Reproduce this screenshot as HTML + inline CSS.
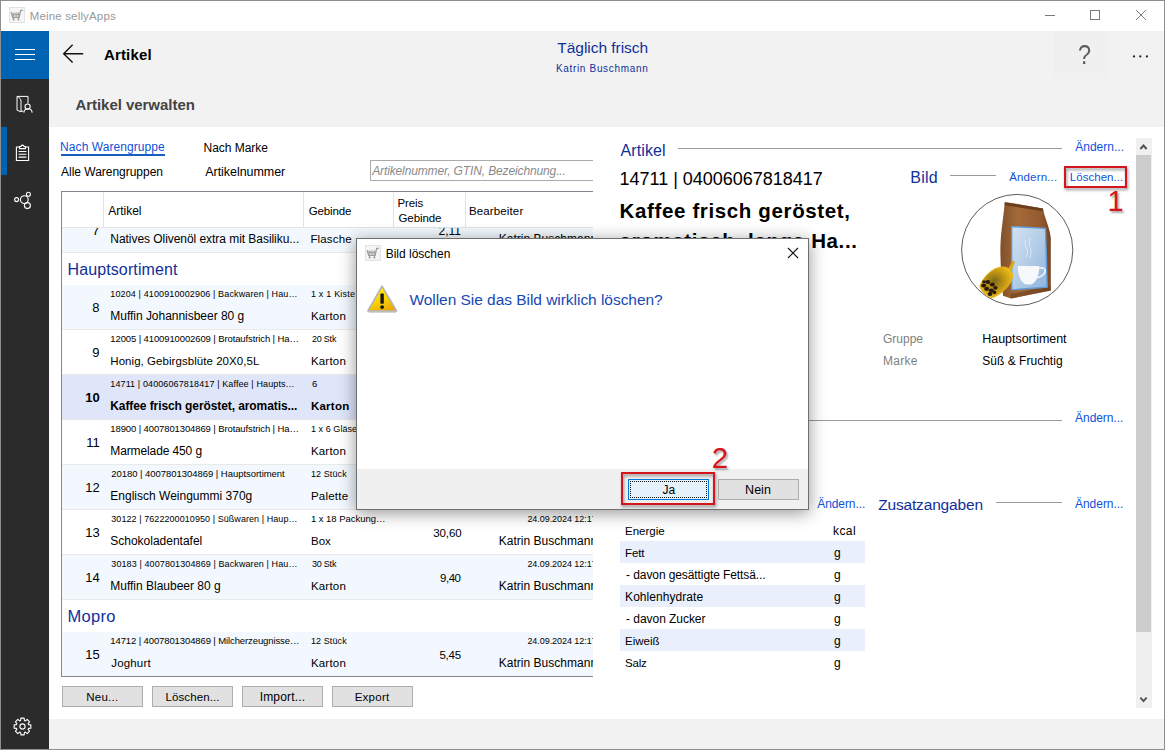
<!DOCTYPE html>
<html lang="de"><head><meta charset="utf-8"><title>Meine sellyApps</title>
<style>
html,body{margin:0;padding:0}
body{width:1165px;height:750px;position:relative;overflow:hidden;background:#fff;font-family:"Liberation Sans",sans-serif}
.t{position:absolute;white-space:nowrap;margin:0}
.b{position:absolute}
.clip{position:absolute;overflow:hidden}
.abs{position:absolute;left:0;top:0}
</style></head><body>
<!-- frame -->
<div class="b" style="left:0;top:0;width:1165px;height:750px;background:#8e8e8e"></div>
<div class="b" style="left:1px;top:1px;width:1163px;height:748px;background:#fff"></div>
<div class="b" style="left:49px;top:31px;width:1115px;height:95.5px;background:#f2f2f2"></div>
<div class="b" style="left:49px;top:719px;width:1115px;height:30px;background:#f2f2f2"></div>
<div class="b" style="left:1054px;top:31px;width:55px;height:47.5px;background:#f0f0f0"></div>
<!-- sidebar -->
<div class="b" style="left:1px;top:31px;width:48px;height:718px;background:#2b2b2b"></div>
<div class="b" style="left:1px;top:31px;width:48px;height:48px;background:#0063b1"></div>
<div class="b" style="left:1px;top:127px;width:5.5px;height:48px;background:#0063b1"></div>
<!-- title bar icon -->
<svg class="b" style="left:9px;top:7px" width="16" height="16" viewBox="0 0 16 16"><rect x=".5" y=".5" width="15" height="15" fill="#f5f5f5" stroke="#e2e2e2"/><path d="M2.2 5.2 L3.6 10.3 L10.2 10.3 L11.6 3.6 L13.8 3.2" fill="none" stroke="#9a9a9a" stroke-width="1.2"/><path d="M4 5.4 L4.6 9.6 M5.9 5.4 L6.1 9.6 M7.8 5.4 L7.7 9.6 M9.6 5.4 L9.2 9.6 M2.6 7.4 L10.6 7.4" stroke="#9a9a9a" stroke-width=".9" fill="none"/><path d="M4.6 10.3 L4.6 12 M9.3 10.3 L9.3 12" stroke="#9a9a9a" stroke-width="1"/><circle cx="4.6" cy="12.4" r="1" fill="#9a9a9a"/><circle cx="9.4" cy="12.4" r="1" fill="#9a9a9a"/></svg>
<!-- window controls -->
<svg class="b" style="left:1040px;top:5px" width="115" height="20" viewBox="0 0 115 20"><path d="M5 10.5 H15" stroke="#7a7a7a" stroke-width="1"/><rect x="50.5" y="5.5" width="9" height="9" fill="none" stroke="#7a7a7a" stroke-width="1"/><path d="M96 5 L106 15 M106 5 L96 15" stroke="#7a7a7a" stroke-width="1"/></svg>
<!-- hamburger -->
<svg class="b" style="left:1px;top:31px" width="48" height="48" viewBox="0 0 48 48"><path d="M14 18.5 H34 M14 23.5 H34 M14 28.5 H34" stroke="#fff" stroke-width="1"/></svg>
<!-- back arrow -->
<svg class="b" style="left:60px;top:41px" width="28" height="26" viewBox="0 0 28 26"><path d="M23.2 12.7 H4 M12.6 3.8 L3.7 12.7 L12.6 21.6" fill="none" stroke="#111" stroke-width="1.4"/></svg>
<!-- more dots -->
<svg class="b" style="left:1128px;top:50px" width="26" height="12" viewBox="0 0 26 12"><circle cx="6" cy="6.4" r="1.1" fill="#222"/><circle cx="12.3" cy="6.4" r="1.1" fill="#222"/><circle cx="18.9" cy="6.4" r="1.1" fill="#222"/></svg>
<!-- sidebar icon 1: folder + person -->
<svg class="b" style="left:13.6px;top:93px" width="22" height="22" viewBox="0 0 22 22"><path d="M3 3.4 H14 V10.4 M3 3.4 C5.4 4.4 7 6 7 8 V18.8 L3 17.2 Z M7 18.2 H9.4" fill="none" stroke="#fff" stroke-width="1" stroke-linejoin="round"/><circle cx="13.6" cy="13.6" r="2.6" fill="none" stroke="#fff" stroke-width="1.1"/><path d="M9.8 19.6 C10.2 16.6 12 15.8 14 15.8 C16 15.8 17.8 16.6 18.2 19.6" fill="none" stroke="#fff" stroke-width="1.1"/></svg>
<!-- sidebar icon 2: clipboard -->
<svg class="b" style="left:13px;top:141px" width="22" height="22" viewBox="0 0 22 22"><path d="M6.5 6 H3.4 V19.5 H15.6 V6 H12.5" fill="none" stroke="#fff" stroke-width="1.1"/><path d="M6.5 7.6 V5.5 H8 C8 3.6 11 3.6 11 5.5 H12.5 V7.6 Z" fill="none" stroke="#fff" stroke-width="1.1" stroke-linejoin="round"/><path d="M5.6 10.5 H13.4 M5.6 13.3 H13.4 M5.6 16.1 H13.4" stroke="#fff" stroke-width="1.1"/></svg>
<!-- sidebar icon 3: share -->
<svg class="b" style="left:11px;top:189px" width="24" height="22" viewBox="0 0 24 22"><circle cx="5.6" cy="10.6" r="2" fill="none" stroke="#fff" stroke-width="1.1"/><circle cx="13.3" cy="10.6" r="3.9" fill="none" stroke="#fff" stroke-width="1.1"/><circle cx="17.4" cy="5.3" r="2" fill="none" stroke="#fff" stroke-width="1.1"/><circle cx="16.4" cy="16.6" r="3" fill="none" stroke="#fff" stroke-width="1.1"/></svg>
<!-- gear -->
<svg class="b" style="left:12px;top:716px" width="21" height="21" viewBox="-10.5 -10.5 21 21"><path id="gearp" fill="none" stroke="#fff" stroke-width="1.1" stroke-linejoin="round" d="M6.01 -1.90 L8.34 -1.66 L8.34 1.66 L6.01 1.90 L5.59 2.90 L7.07 4.72 L4.72 7.07 L2.90 5.59 L1.90 6.01 L1.66 8.34 L-1.66 8.34 L-1.90 6.01 L-2.90 5.59 L-4.72 7.07 L-7.07 4.72 L-5.59 2.90 L-6.01 1.90 L-8.34 1.66 L-8.34 -1.66 L-6.01 -1.90 L-5.59 -2.90 L-7.07 -4.72 L-4.72 -7.07 L-2.90 -5.59 L-1.90 -6.01 L-1.66 -8.34 L1.66 -8.34 L1.90 -6.01 L2.90 -5.59 L4.72 -7.07 L7.07 -4.72 L5.59 -2.90 Z"/><circle r="2.6" fill="none" stroke="#fff" stroke-width="1.1"/></svg>

<div class="b" style="left:61px;top:154px;width:103.5px;height:2px;background:#1a5cc0"></div>
<div class="b" style="left:62px;top:686px;width:81px;height:20.5px;background:#e1e1e1;border:1px solid #adadad;box-sizing:border-box"></div>
<div class="b" style="left:152px;top:686px;width:81px;height:20.5px;background:#e1e1e1;border:1px solid #adadad;box-sizing:border-box"></div>
<div class="b" style="left:242px;top:686px;width:81px;height:20.5px;background:#e1e1e1;border:1px solid #adadad;box-sizing:border-box"></div>
<div class="b" style="left:332px;top:686px;width:81px;height:20.5px;background:#e1e1e1;border:1px solid #adadad;box-sizing:border-box"></div>
<div class="t" style="left:29.70px;top:8.00px;font-size:11.5px;line-height:17px;color:#999;letter-spacing:0.165px;">Meine sellyApps</div>
<div class="t" style="left:104.00px;top:44.00px;font-size:15px;line-height:22px;color:#000;font-weight:700;letter-spacing:0.147px;">Artikel</div>
<div class="t" style="left:75.40px;top:94.00px;font-size:15px;line-height:22px;color:#444;font-weight:700;letter-spacing:-0.037px;">Artikel verwalten</div>
<div class="t" style="left:557.30px;top:36.00px;font-size:15.5px;line-height:23px;color:#11309a;letter-spacing:-0.037px;">Täglich frisch</div>
<div class="t" style="left:555.90px;top:61.00px;font-size:10px;line-height:15px;color:#11309a;letter-spacing:0.677px;">Katrin Buschmann</div>
<div class="t" style="left:1077.60px;top:34.00px;font-size:28px;line-height:42px;color:#5e5e5e;transform:scaleX(.84);transform-origin:0 50%;">?</div>
<div class="t" style="left:60.10px;top:138.00px;font-size:12px;line-height:18px;color:#0f52da;letter-spacing:0.071px;">Nach Warengruppe</div>
<div class="t" style="left:203.50px;top:139.00px;font-size:12px;line-height:18px;color:#000;letter-spacing:-0.024px;">Nach Marke</div>
<div class="t" style="left:61.10px;top:163.00px;font-size:12px;line-height:18px;color:#000;letter-spacing:-0.025px;">Alle Warengruppen</div>
<div class="t" style="left:205.30px;top:163.00px;font-size:12.5px;line-height:19px;color:#000;letter-spacing:-0.051px;">Artikelnummer</div>
<div class="t" style="left:86.30px;top:689.00px;font-size:11.5px;line-height:17px;color:#000;letter-spacing:0.223px;">Neu...</div>
<div class="t" style="left:165.40px;top:689.00px;font-size:11.5px;line-height:17px;color:#000;letter-spacing:0.115px;">Löschen...</div>
<div class="t" style="left:259.70px;top:688.00px;font-size:12px;line-height:18px;color:#000;letter-spacing:0.178px;">Import...</div>
<div class="t" style="left:354.70px;top:689.00px;font-size:11.5px;line-height:17px;color:#000;letter-spacing:0.252px;">Export</div>
<div class="clip" style="left:0;top:0;width:593.3px;height:750px">
<div class="b" style="left:370px;top:160px;width:240px;height:21px;border:1px solid #ababab;box-sizing:border-box;background:#fff"></div>
<div class="b" style="left:61px;top:191px;width:560px;height:486px;border:1px solid #828790;box-sizing:border-box;background:#fff"></div>
<div class="b" style="left:103px;top:192px;width:1px;height:35.5px;background:#e3e3e3"></div>
<div class="b" style="left:303px;top:192px;width:1px;height:35.5px;background:#e3e3e3"></div>
<div class="b" style="left:393px;top:192px;width:1px;height:35.5px;background:#e3e3e3"></div>
<div class="b" style="left:465px;top:192px;width:1px;height:35.5px;background:#e3e3e3"></div>
<div class="b" style="left:62px;top:227px;width:540px;height:1px;background:#e3e3e3"></div>
<div class="t" style="left:372.20px;top:162.00px;font-size:12px;line-height:18px;color:#8a8a8a;font-style:italic;letter-spacing:-0.128px;">Artikelnummer, GTIN, Bezeichnung...</div>
<div class="t" style="left:108.20px;top:202.00px;font-size:12px;line-height:18px;color:#000;letter-spacing:-0.012px;">Artikel</div>
<div class="t" style="left:308.80px;top:203.00px;font-size:11.5px;line-height:17px;color:#000;letter-spacing:-0.164px;">Gebinde</div>
<div class="t" style="left:397.50px;top:195.00px;font-size:11.5px;line-height:17px;color:#000;letter-spacing:-0.113px;">Preis</div>
<div class="t" style="left:398.50px;top:210.00px;font-size:11.5px;line-height:17px;color:#000;letter-spacing:-0.081px;">Gebinde</div>
<div class="t" style="left:469.00px;top:203.00px;font-size:11.5px;line-height:17px;color:#000;letter-spacing:0.130px;">Bearbeiter</div>
<div class="clip" style="left:62px;top:227.6px;width:540px;height:448.6px"><div class="abs" style="left:-62px;top:-227.6px">
<div class="b" style="left:62px;top:207.4px;width:540px;height:45px;background:#f2f8fd"></div>
<div class="b" style="left:62px;top:251.9px;width:540px;height:1px;background:#e9e9e9"></div>
<div class="b" style="left:62px;top:284.5px;width:540px;height:45px;background:#f2f8fd"></div>
<div class="b" style="left:62px;top:329.0px;width:540px;height:1px;background:#e9e9e9"></div>
<div class="b" style="left:62px;top:374.0px;width:540px;height:1px;background:#e9e9e9"></div>
<div class="b" style="left:62px;top:374.5px;width:540px;height:45px;background:#dfe6fa"></div>
<div class="b" style="left:62px;top:419.0px;width:540px;height:1px;background:#e9e9e9"></div>
<div class="b" style="left:62px;top:464.0px;width:540px;height:1px;background:#e9e9e9"></div>
<div class="b" style="left:62px;top:464.5px;width:540px;height:45px;background:#f2f8fd"></div>
<div class="b" style="left:62px;top:509.0px;width:540px;height:1px;background:#e9e9e9"></div>
<div class="b" style="left:62px;top:554.0px;width:540px;height:1px;background:#e9e9e9"></div>
<div class="b" style="left:62px;top:554.5px;width:540px;height:45px;background:#f2f8fd"></div>
<div class="b" style="left:62px;top:599.0px;width:540px;height:1px;background:#e9e9e9"></div>
<div class="b" style="left:62px;top:599.5px;width:540px;height:32px;background:#fff"></div>
<div class="b" style="left:62px;top:631.5px;width:540px;height:45px;background:#f2f8fd"></div>
<div class="b" style="left:62px;top:676.0px;width:540px;height:1px;background:#e9e9e9"></div>
<div class="t" style="left:92.30px;top:221.00px;font-size:13px;line-height:20px;color:#000;">7</div>
<div class="t" style="left:110.30px;top:230.00px;font-size:12px;line-height:18px;color:#000;letter-spacing:-0.049px;">Natives Olivenöl extra mit Basiliku...</div>
<div class="t" style="left:310.40px;top:231.00px;font-size:11.5px;line-height:17px;color:#000;letter-spacing:0.155px;">Flasche</div>
<div class="t" style="left:438.50px;top:222.00px;font-size:12px;line-height:18px;color:#000;">2,11</div>
<div class="t" style="left:498.70px;top:230.00px;font-size:12px;line-height:18px;color:#000;letter-spacing:0.028px;">Katrin Buschmann</div>
<div class="t" style="left:67.50px;top:258.00px;font-size:16px;line-height:24px;color:#11309a;letter-spacing:0.112px;">Hauptsortiment</div>
<div class="t" style="left:92.30px;top:298.00px;font-size:13px;line-height:20px;color:#000;">8</div>
<div class="t" style="left:110.30px;top:287.00px;font-size:9px;line-height:14px;color:#000;letter-spacing:0.127px;">10204 | 4100910002906 | Backwaren | Hau…</div>
<div class="t" style="left:110.30px;top:307.00px;font-size:12px;line-height:18px;color:#000;letter-spacing:-0.029px;">Muffin Johannisbeer 80 g</div>
<div class="t" style="left:310.90px;top:287.00px;font-size:9px;line-height:14px;color:#000;letter-spacing:0.208px;">1 x 1 Kiste</div>
<div class="t" style="left:310.90px;top:308.00px;font-size:11.5px;line-height:17px;color:#000;letter-spacing:0.203px;">Karton</div>
<div class="t" style="left:437.00px;top:299.00px;font-size:12.5px;line-height:19px;color:#000;letter-spacing:0.074px;">4,50</div>
<div class="t" style="left:527.40px;top:287.00px;font-size:9px;line-height:14px;color:#000;letter-spacing:-0.051px;">24.09.2024 12:17</div>
<div class="t" style="left:498.70px;top:307.00px;font-size:12px;line-height:18px;color:#000;letter-spacing:0.028px;">Katrin Buschmann</div>
<div class="t" style="left:92.30px;top:343.00px;font-size:13px;line-height:20px;color:#000;">9</div>
<div class="t" style="left:110.30px;top:332.00px;font-size:9.5px;line-height:14px;color:#000;letter-spacing:-0.112px;">12005 | 4100910002609 | Brotaufstrich | Ha…</div>
<div class="t" style="left:110.30px;top:353.00px;font-size:11.5px;line-height:17px;color:#000;letter-spacing:0.051px;">Honig, Gebirgsblüte 20X0,5L</div>
<div class="t" style="left:311.90px;top:332.00px;font-size:9px;line-height:14px;color:#000;letter-spacing:-0.203px;">20 Stk</div>
<div class="t" style="left:310.90px;top:353.00px;font-size:11.5px;line-height:17px;color:#000;letter-spacing:0.203px;">Karton</div>
<div class="t" style="left:437.00px;top:344.00px;font-size:12.5px;line-height:19px;color:#000;letter-spacing:0.074px;">8,90</div>
<div class="t" style="left:527.40px;top:332.00px;font-size:9px;line-height:14px;color:#000;letter-spacing:-0.051px;">24.09.2024 12:17</div>
<div class="t" style="left:498.70px;top:352.00px;font-size:12px;line-height:18px;color:#000;letter-spacing:0.028px;">Katrin Buschmann</div>
<div class="t" style="left:85.30px;top:388.00px;font-size:13px;line-height:20px;color:#000;font-weight:700;">10</div>
<div class="t" style="left:110.30px;top:377.00px;font-size:9px;line-height:14px;color:#000;letter-spacing:0.112px;">14711 | 04006067818417 | Kaffee | Haupts…</div>
<div class="t" style="left:110.30px;top:397.00px;font-size:12px;line-height:18px;color:#000;font-weight:700;letter-spacing:-0.089px;">Kaffee frisch geröstet, aromatis...</div>
<div class="t" style="left:311.90px;top:377.00px;font-size:9.5px;line-height:14px;color:#000;">6</div>
<div class="t" style="left:310.90px;top:398.00px;font-size:11.5px;line-height:17px;color:#000;font-weight:700;letter-spacing:0.254px;">Karton</div>
<div class="t" style="left:436.00px;top:389.00px;font-size:12.5px;line-height:19px;color:#000;letter-spacing:0.408px;">7,20</div>
<div class="t" style="left:527.40px;top:377.00px;font-size:9px;line-height:14px;color:#000;letter-spacing:-0.051px;">24.09.2024 12:17</div>
<div class="t" style="left:498.70px;top:398.00px;font-size:11.5px;line-height:17px;color:#000;font-weight:700;letter-spacing:-0.294px;">Katrin Buschmann</div>
<div class="t" style="left:86.30px;top:433.00px;font-size:13px;line-height:20px;color:#000;">11</div>
<div class="t" style="left:110.30px;top:422.00px;font-size:9.5px;line-height:14px;color:#000;letter-spacing:-0.112px;">18900 | 4007801304869 | Brotaufstrich | Ha…</div>
<div class="t" style="left:110.30px;top:442.00px;font-size:12px;line-height:18px;color:#000;letter-spacing:-0.115px;">Marmelade 450 g</div>
<div class="t" style="left:310.90px;top:422.00px;font-size:9px;line-height:14px;color:#000;letter-spacing:0.071px;">1 x 6 Gläser</div>
<div class="t" style="left:310.90px;top:443.00px;font-size:11.5px;line-height:17px;color:#000;letter-spacing:0.203px;">Karton</div>
<div class="t" style="left:436.00px;top:434.00px;font-size:12.5px;line-height:19px;color:#000;letter-spacing:0.408px;">3,10</div>
<div class="t" style="left:527.40px;top:422.00px;font-size:9px;line-height:14px;color:#000;letter-spacing:-0.051px;">24.09.2024 12:17</div>
<div class="t" style="left:498.70px;top:442.00px;font-size:12px;line-height:18px;color:#000;letter-spacing:0.028px;">Katrin Buschmann</div>
<div class="t" style="left:85.30px;top:478.00px;font-size:13px;line-height:20px;color:#000;">12</div>
<div class="t" style="left:111.30px;top:467.00px;font-size:9.5px;line-height:14px;color:#000;letter-spacing:-0.043px;">20180 | 4007801304869 | Hauptsortiment</div>
<div class="t" style="left:110.30px;top:487.00px;font-size:12px;line-height:18px;color:#000;letter-spacing:0.006px;">Englisch Weingummi 370g</div>
<div class="t" style="left:310.90px;top:467.00px;font-size:9px;line-height:14px;color:#000;letter-spacing:0.111px;">12 Stück</div>
<div class="t" style="left:310.90px;top:488.00px;font-size:11.5px;line-height:17px;color:#000;letter-spacing:0.232px;">Palette</div>
<div class="t" style="left:436.00px;top:479.00px;font-size:12.5px;line-height:19px;color:#000;letter-spacing:0.408px;">2,20</div>
<div class="t" style="left:527.40px;top:467.00px;font-size:9px;line-height:14px;color:#000;letter-spacing:-0.051px;">24.09.2024 12:17</div>
<div class="t" style="left:498.70px;top:487.00px;font-size:12px;line-height:18px;color:#000;letter-spacing:0.028px;">Katrin Buschmann</div>
<div class="t" style="left:85.30px;top:523.00px;font-size:13px;line-height:20px;color:#000;">13</div>
<div class="t" style="left:111.30px;top:512.00px;font-size:9px;line-height:14px;color:#000;letter-spacing:0.065px;">30122 | 7622200010950 | Süßwaren | Haup…</div>
<div class="t" style="left:110.30px;top:532.00px;font-size:12px;line-height:18px;color:#000;letter-spacing:-0.007px;">Schokoladentafel</div>
<div class="t" style="left:310.90px;top:512.00px;font-size:9.5px;line-height:14px;color:#000;letter-spacing:-0.028px;">1 x 18 Packung…</div>
<div class="t" style="left:310.90px;top:533.00px;font-size:11.5px;line-height:17px;color:#000;letter-spacing:0.067px;">Box</div>
<div class="t" style="left:433.20px;top:525.00px;font-size:11.5px;line-height:17px;color:#000;letter-spacing:-0.096px;">30,60</div>
<div class="t" style="left:527.40px;top:512.00px;font-size:9px;line-height:14px;color:#000;letter-spacing:-0.051px;">24.09.2024 12:17</div>
<div class="t" style="left:498.70px;top:532.00px;font-size:12px;line-height:18px;color:#000;letter-spacing:0.028px;">Katrin Buschmann</div>
<div class="t" style="left:85.30px;top:568.00px;font-size:13px;line-height:20px;color:#000;">14</div>
<div class="t" style="left:111.30px;top:557.00px;font-size:9px;line-height:14px;color:#000;letter-spacing:0.101px;">30183 | 4007801304869 | Backwaren | Hau…</div>
<div class="t" style="left:110.30px;top:577.00px;font-size:12px;line-height:18px;color:#000;letter-spacing:-0.013px;">Muffin Blaubeer 80 g</div>
<div class="t" style="left:311.90px;top:557.00px;font-size:9px;line-height:14px;color:#000;letter-spacing:-0.203px;">30 Stk</div>
<div class="t" style="left:310.90px;top:578.00px;font-size:11.5px;line-height:17px;color:#000;letter-spacing:0.203px;">Karton</div>
<div class="t" style="left:440.00px;top:570.00px;font-size:11.5px;line-height:17px;color:#000;letter-spacing:-0.462px;">9,40</div>
<div class="t" style="left:527.40px;top:557.00px;font-size:9px;line-height:14px;color:#000;letter-spacing:-0.051px;">24.09.2024 12:17</div>
<div class="t" style="left:498.70px;top:577.00px;font-size:12px;line-height:18px;color:#000;letter-spacing:0.028px;">Katrin Buschmann</div>
<div class="t" style="left:67.50px;top:604.00px;font-size:16.5px;line-height:25px;color:#11309a;letter-spacing:0.277px;">Mopro</div>
<div class="t" style="left:85.30px;top:645.00px;font-size:13px;line-height:20px;color:#000;">15</div>
<div class="t" style="left:110.30px;top:634.00px;font-size:9.5px;line-height:14px;color:#000;letter-spacing:-0.110px;">14712 | 4007801304869 | Milcherzeugnisse…</div>
<div class="t" style="left:111.30px;top:655.00px;font-size:11.5px;line-height:17px;color:#000;letter-spacing:0.156px;">Joghurt</div>
<div class="t" style="left:310.90px;top:634.00px;font-size:9px;line-height:14px;color:#000;letter-spacing:0.111px;">12 Stück</div>
<div class="t" style="left:310.90px;top:655.00px;font-size:11.5px;line-height:17px;color:#000;letter-spacing:0.203px;">Karton</div>
<div class="t" style="left:439.40px;top:647.00px;font-size:11.5px;line-height:17px;color:#000;letter-spacing:-0.196px;">5,45</div>
<div class="t" style="left:527.40px;top:634.00px;font-size:9px;line-height:14px;color:#000;letter-spacing:-0.051px;">24.09.2024 12:17</div>
<div class="t" style="left:498.70px;top:654.00px;font-size:12px;line-height:18px;color:#000;letter-spacing:0.028px;">Katrin Buschmann</div>
</div></div>
</div>
<!-- right panel -->
<div class="b" style="left:678px;top:148px;width:384px;height:1px;background:#9a9a9a"></div>
<div class="b" style="left:950px;top:175px;width:46px;height:1px;background:#9a9a9a"></div>
<div class="b" style="left:676px;top:420px;width:386px;height:1px;background:#9a9a9a"></div>
<div class="b" style="left:708px;top:502px;width:98px;height:1px;background:#9a9a9a"></div>
<div class="b" style="left:996px;top:502px;width:66px;height:1px;background:#9a9a9a"></div>
<div class="b" style="left:620px;top:541px;width:245px;height:22px;background:#e9effb"></div>
<div class="b" style="left:620px;top:585px;width:245px;height:22px;background:#e9effb"></div>
<div class="b" style="left:620px;top:629px;width:245px;height:22px;background:#e9effb"></div>
<div class="b" style="left:1136px;top:138px;width:16px;height:570px;background:#f0f0f0"></div>
<div class="b" style="left:1136px;top:154.5px;width:15px;height:477.5px;background:#cdcdcd"></div>
<svg class="b" style="left:1136px;top:138px" width="16" height="17"><path d="M4.4 11 L7.5 7.5 L10.6 11" fill="none" stroke="#505050" stroke-width="1.9"/></svg>
<svg class="b" style="left:1136px;top:691px" width="16" height="17"><path d="M4.4 6.6 L7.5 10.1 L10.6 6.6" fill="none" stroke="#505050" stroke-width="1.9"/></svg>
<div class="t" style="left:620.60px;top:139.00px;font-size:16px;line-height:24px;color:#11309a;letter-spacing:0.084px;">Artikel</div>
<div class="t" style="left:1075.20px;top:138.00px;font-size:12px;line-height:18px;color:#0f52da;letter-spacing:0.017px;">Ändern...</div>
<div class="t" style="left:619.60px;top:166.00px;font-size:18px;line-height:27px;color:#000;letter-spacing:-0.016px;">14711 | 04006067818417</div>
<div class="t" style="left:910.30px;top:166.00px;font-size:16px;line-height:24px;color:#11309a;letter-spacing:0.240px;">Bild</div>
<div class="t" style="left:1009.20px;top:169.00px;font-size:11.5px;line-height:17px;color:#0f52da;letter-spacing:0.153px;">Ändern...</div>
<div class="t" style="left:1069.80px;top:169.00px;font-size:11.5px;line-height:17px;color:#0f52da;letter-spacing:0.037px;">Löschen...</div>
<div class="t" style="left:619.60px;top:195.00px;font-size:20.5px;line-height:31px;color:#000;font-weight:700;letter-spacing:0.634px;">Kaffee frisch geröstet,</div>
<div class="t" style="left:619.60px;top:225.00px;font-size:20.5px;line-height:31px;color:#000;font-weight:700;letter-spacing:0.641px;">aromatisch, lange Ha...</div>
<div class="t" style="left:883.00px;top:330.00px;font-size:12px;line-height:18px;color:#7f7f7f;letter-spacing:-0.010px;">Gruppe</div>
<div class="t" style="left:982.30px;top:330.00px;font-size:12.5px;line-height:19px;color:#000;letter-spacing:-0.037px;">Hauptsortiment</div>
<div class="t" style="left:883.00px;top:352.00px;font-size:12px;line-height:18px;color:#7f7f7f;letter-spacing:0.258px;">Marke</div>
<div class="t" style="left:982.30px;top:352.00px;font-size:12px;line-height:18px;color:#000;letter-spacing:0.019px;">Süß &amp; Fruchtig</div>
<div class="t" style="left:619.60px;top:410.00px;font-size:15px;line-height:22px;color:#11309a;letter-spacing:0.005px;">Preise</div>
<div class="t" style="left:1075.10px;top:409.00px;font-size:12px;line-height:18px;color:#0f52da;letter-spacing:-0.070px;">Ändern...</div>
<div class="t" style="left:619.60px;top:493.00px;font-size:16px;line-height:24px;color:#11309a;letter-spacing:0.162px;">Nährwerte</div>
<div class="t" style="left:817.30px;top:495.00px;font-size:12px;line-height:18px;color:#0f52da;letter-spacing:-0.095px;">Ändern...</div>
<div class="t" style="left:878.20px;top:493.00px;font-size:15.5px;line-height:23px;color:#11309a;letter-spacing:-0.170px;">Zusatzangaben</div>
<div class="t" style="left:1075.00px;top:495.00px;font-size:12px;line-height:18px;color:#0f52da;letter-spacing:-0.033px;">Ändern...</div>
<div class="t" style="left:625.10px;top:523.00px;font-size:11.5px;line-height:17px;color:#000;letter-spacing:-0.024px;">Energie</div>
<div class="t" style="left:833.10px;top:522.00px;font-size:12px;line-height:18px;color:#000;letter-spacing:0.375px;">kcal</div>
<div class="t" style="left:625.10px;top:545.00px;font-size:11.5px;line-height:17px;color:#000;letter-spacing:-0.138px;">Fett</div>
<div class="t" style="left:834.10px;top:544.00px;font-size:12px;line-height:18px;color:#000;">g</div>
<div class="t" style="left:626.10px;top:566.00px;font-size:12px;line-height:18px;color:#000;letter-spacing:-0.094px;">- davon gesättigte Fettsä...</div>
<div class="t" style="left:834.10px;top:566.00px;font-size:12px;line-height:18px;color:#000;">g</div>
<div class="t" style="left:625.10px;top:588.00px;font-size:12px;line-height:18px;color:#000;letter-spacing:0.049px;">Kohlenhydrate</div>
<div class="t" style="left:834.10px;top:588.00px;font-size:12px;line-height:18px;color:#000;">g</div>
<div class="t" style="left:626.10px;top:610.00px;font-size:12px;line-height:18px;color:#000;letter-spacing:-0.049px;">- davon Zucker</div>
<div class="t" style="left:834.10px;top:610.00px;font-size:12px;line-height:18px;color:#000;">g</div>
<div class="t" style="left:625.10px;top:633.00px;font-size:11.5px;line-height:17px;color:#000;letter-spacing:-0.036px;">Eiweiß</div>
<div class="t" style="left:834.10px;top:632.00px;font-size:12px;line-height:18px;color:#000;">g</div>
<div class="t" style="left:625.10px;top:655.00px;font-size:11.5px;line-height:17px;color:#000;letter-spacing:-0.207px;">Salz</div>
<div class="t" style="left:834.10px;top:654.00px;font-size:12px;line-height:18px;color:#000;">g</div>
<!-- product image -->
<svg class="b" style="left:957px;top:190px" width="120" height="120" viewBox="957 190 120 120">
<defs>
<linearGradient id="bagg" x1="0" y1="0" x2="1" y2="0"><stop offset="0" stop-color="#80502a"/><stop offset=".35" stop-color="#a46a3a"/><stop offset=".8" stop-color="#935a2f"/><stop offset="1" stop-color="#744623"/></linearGradient>
<linearGradient id="lblg" x1="0" y1="0" x2="1" y2="1"><stop offset="0" stop-color="#d3e2f1"/><stop offset=".5" stop-color="#b3cde8"/><stop offset="1" stop-color="#8db3dc"/></linearGradient>
<radialGradient id="scg" cx=".45" cy=".45" r=".6"><stop offset="0" stop-color="#7d6a16"/><stop offset=".55" stop-color="#c79a12"/><stop offset="1" stop-color="#f1c21a"/></radialGradient>
<clipPath id="circ"><circle cx="1017.2" cy="250" r="55.2"/></clipPath>
</defs>
<circle cx="1017.2" cy="250" r="55.6" fill="#fff" stroke="#4a4a4a" stroke-width=".9"/>
<g clip-path="url(#circ)">
<path d="M1004.8 202.2 L1012 203 L1042.9 208.6 L1044.2 214 C1046.5 222 1050.2 230 1050.8 238 L1050.8 290.6 L1011 298.6 L1003 295.8 C1001.5 280 1000.2 262 1000.4 247 C1000.8 232 1003.6 216 1004.8 202.2 Z" fill="url(#bagg)"/>
<path d="M1004.8 202.2 L1042.9 208.6 L1043.3 211.2 L1004.6 205.2 Z" fill="#6a3d1c"/>
<path d="M1011 298.6 L1050.8 290.6 L1050.8 286 L1010.6 294 Z" fill="#6a3d1c" opacity=".6"/>
<path d="M1011.7 226.6 L1045.5 228.3 L1047.2 287.2 L1011.7 289.8 Z" fill="url(#lblg)" stroke="#5f9ad6" stroke-width="1.4"/>
<path d="M1026 240 C1022 246 1031 250 1026 257 M1030 238 C1027 246 1034 250 1029.5 258" fill="none" stroke="#e6eef8" stroke-width=".9" opacity=".9"/>
<path d="M1017.8 266 H1039.2 C1039.4 274 1037 281.5 1031.6 284.4 H1025.4 C1020 281.5 1017.6 274 1017.8 266 Z" fill="#f6f8fb"/>
<path d="M1039 268.2 C1044.5 266.4 1047 270.6 1043.6 274.2 C1041.6 276.2 1039 277.4 1037.2 277.8" fill="none" stroke="#f6f8fb" stroke-width="1.5"/>
<path d="M1006.6 271.4 L1012.2 261.4 C1013.2 259.8 1015.4 261 1014.6 262.8 L1010.4 273.4 Z" fill="#d9a81a"/>
<path d="M979.8 286.5 C983 276 994 266.4 1003.6 267 C1010.6 267.6 1013.4 272.8 1012.4 277.6 C1010 287.4 998.4 296 992.6 297.6 C989 298 981 291.6 979.8 286.5 Z" fill="url(#scg)" stroke="#e7b516" stroke-width="1"/>
<g fill="#2a190e"><ellipse cx="983.6" cy="285.6" rx="2.5" ry="2"/><ellipse cx="987.8" cy="282" rx="2.4" ry="2"/><ellipse cx="992.4" cy="284.4" rx="2.5" ry="2"/><ellipse cx="986.6" cy="288.8" rx="2.5" ry="2.1"/><ellipse cx="991.2" cy="290.6" rx="2.5" ry="2"/><ellipse cx="995.4" cy="287.8" rx="2.2" ry="1.9"/><ellipse cx="990" cy="294" rx="2.4" ry="1.9"/><ellipse cx="994.4" cy="292.4" rx="2" ry="1.8"/><ellipse cx="984" cy="281.8" rx="1.8" ry="1.5"/></g>
</g>
</svg>

<!-- dialog -->
<div class="b" style="left:356px;top:238px;width:453px;height:272px;box-sizing:border-box;border:1px solid #6f6f6f;background:#fff;box-shadow:0 3px 16px rgba(0,0,0,.42)"></div>
<div class="b" style="left:357px;top:469px;width:451px;height:40px;background:#f0f0f0"></div>
<div class="b" style="left:628px;top:479px;width:81px;height:20.5px;box-sizing:border-box;border:1px solid #0078d7;background:#e5f1fb"></div>
<div class="b" style="left:630px;top:481px;width:77px;height:16.5px;box-sizing:border-box;border:1px dotted #111"></div>
<div class="b" style="left:718px;top:479px;width:81px;height:20.5px;box-sizing:border-box;border:1px solid #adadad;background:#e1e1e1"></div>

<div class="t" style="left:385.70px;top:245.00px;font-size:12px;line-height:18px;color:#000;">Bild löschen</div>
<div class="t" style="left:409.40px;top:288.00px;font-size:15.5px;line-height:23px;color:#1848b4;letter-spacing:-0.039px;">Wollen Sie das Bild wirklich löschen?</div>
<div class="t" style="left:662.40px;top:481.00px;font-size:12px;line-height:18px;color:#000;">Ja</div>
<div class="t" style="left:745.10px;top:481.00px;font-size:12.5px;line-height:19px;color:#000;letter-spacing:0.015px;">Nein</div>
<!-- dialog title icon -->
<svg class="b" style="left:365px;top:245px" width="16" height="16" viewBox="0 0 16 16"><rect x=".5" y=".5" width="15" height="15" fill="#f5f5f5" stroke="#e2e2e2"/><path d="M2.2 5.2 L3.6 10.3 L10.2 10.3 L11.6 3.6 L13.8 3.2" fill="none" stroke="#9a9a9a" stroke-width="1.2"/><path d="M4 5.4 L4.6 9.6 M5.9 5.4 L6.1 9.6 M7.8 5.4 L7.7 9.6 M9.6 5.4 L9.2 9.6 M2.6 7.4 L10.6 7.4" stroke="#9a9a9a" stroke-width=".9" fill="none"/><path d="M4.6 10.3 L4.6 12 M9.3 10.3 L9.3 12" stroke="#9a9a9a" stroke-width="1"/><circle cx="4.6" cy="12.4" r="1" fill="#9a9a9a"/><circle cx="9.4" cy="12.4" r="1" fill="#9a9a9a"/></svg>
<!-- dialog close -->
<svg class="b" style="left:786px;top:246px" width="14" height="14" viewBox="0 0 14 14"><path d="M2 2 L12 12 M12 2 L2 12" stroke="#111" stroke-width="1.1"/></svg>
<!-- warning icon -->
<svg class="b" style="left:365px;top:283px" width="35" height="31" viewBox="0 0 35 31"><defs><linearGradient id="wg" x1="0.3" y1="0" x2="0.8" y2="1"><stop offset="0" stop-color="#fff200"/><stop offset=".55" stop-color="#f8cf00"/><stop offset="1" stop-color="#eba300"/></linearGradient></defs><path d="M17 3.2 L31.6 28 H2.9 Z" fill="url(#wg)" stroke="#b4b4b8" stroke-width="1.6" stroke-linejoin="round"/><path d="M3.6 29.2 H31" stroke="#9a9a9a" stroke-width="1" opacity=".6"/><rect x="15.4" y="10.4" width="3.4" height="10.4" rx=".8" fill="#15151f"/><circle cx="17.1" cy="24.1" r="1.9" fill="#15151f"/></svg>

<!-- annotations -->
<div class="b" style="left:1064px;top:166px;width:63px;height:22px;box-sizing:border-box;border:2px solid #d4161c;filter:drop-shadow(1.5px 2px 1.5px rgba(0,0,0,.45))"></div>
<div class="b" style="left:621px;top:472.3px;width:93.5px;height:32.3px;box-sizing:border-box;border:2px solid #d4161c;filter:drop-shadow(1.5px 2px 1.5px rgba(0,0,0,.45))"></div>
<div class="t" style="left:1107.60px;top:179.00px;font-size:29px;line-height:44px;color:#d4161c;text-shadow:1.5px 1.5px 2px rgba(0,0,0,.35);">1</div>
<div class="t" style="left:711.70px;top:436.00px;font-size:29.5px;line-height:44px;color:#d4161c;text-shadow:1.5px 1.5px 2px rgba(0,0,0,.35);">2</div>
</body></html>
